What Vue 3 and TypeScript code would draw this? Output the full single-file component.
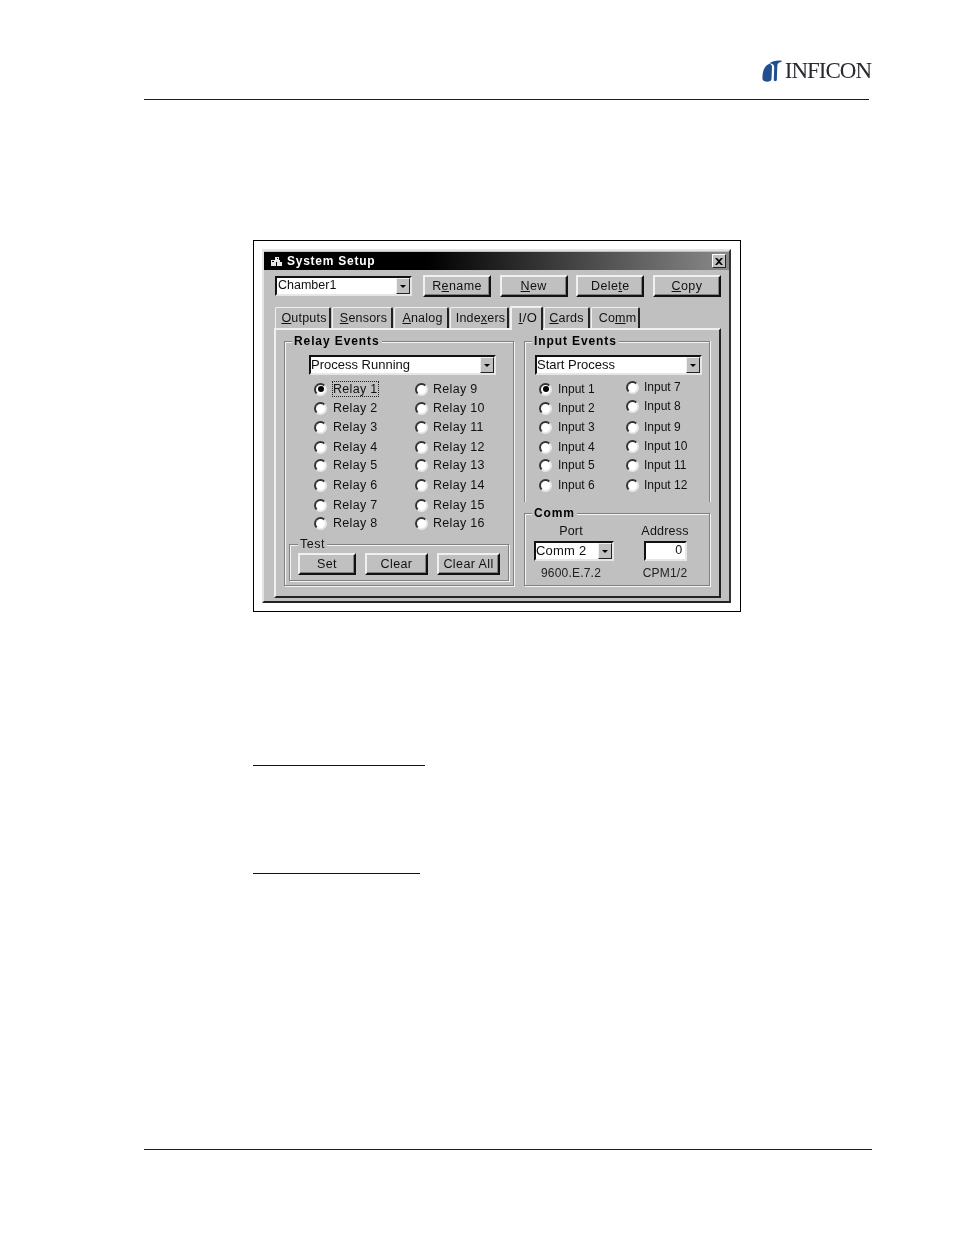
<script setup lang="ts">
const actions = [
  { pre: 'R', key: 'e', post: 'name' },
  { pre: '', key: 'N', post: 'ew' },
  { pre: 'Dele', key: 't', post: 'e' },
  { pre: '', key: 'C', post: 'opy' },
]
const tabs = [
  { pre: '', key: 'O', post: 'utputs', cls: 'w-outputs', active: false },
  { pre: '', key: 'S', post: 'ensors', cls: 'w-sensors', active: false },
  { pre: '', key: 'A', post: 'nalog', cls: 'w-analog', active: false },
  { pre: 'Inde', key: 'x', post: 'ers', cls: 'w-indexers', active: false },
  { pre: '', key: 'I', post: '/O', cls: 'w-io', active: true },
  { pre: '', key: 'C', post: 'ards', cls: 'w-cards', active: false },
  { pre: 'Co', key: 'm', post: 'm', cls: 'w-comm', active: false },
]
const range = (name: string, from: number, to: number) => {
  const out: string[] = []
  for (let i = from; i <= to; i++) out.push(`${name} ${i}`)
  return out
}
const relayA = range('Relay', 1, 8)
const relayB = range('Relay', 9, 16)
const inputA = range('Input', 1, 6)
const inputB = range('Input', 7, 12)
</script>

<template>
  <div class="page">
    <header class="head">
      <div class="logo">
        <svg class="logo-mark" viewBox="0 0 20 22" width="20" height="22" aria-hidden="true">
          <path d="M0.5 19 C0 12 2.5 5.500 7 4 C8.500 3.500 10 4.500 10 7 L9.500 19 C9.500 22.500 1 22.500 0.500 19 Z" fill="#1f4f8f" />
          <path d="M7 3.500 C10 1 15 0 19.500 0.500 L19.500 2 C17 2 15.500 3 15.300 6 L14.800 20 C14.800 21.500 11.800 21.500 11.800 20 L12.200 7 C12.200 4.500 10 3 7 3.500 Z" fill="#1f4f8f" />
        </svg>
        <span class="logo-text">INFICON</span>
      </div>
    </header>

    <div class="shot">
      <div class="window">
        <div class="title">
          <svg class="title-icon" viewBox="0 0 14 11" width="14" height="11" aria-hidden="true">
            <path d="M1 4h4V1h4v3h1v2H6v4H1z M7 6h5v4H7z" fill="#e8e8e8" />
            <path d="M2 5h2v1H2z M7 2h1v1H7z" fill="#000" />
          </svg>
          <span class="title-text">System Setup</span>
          <span class="close">
            <svg viewBox="0 0 8 7" width="8" height="7" aria-hidden="true">
              <path d="M0 0h2l2 2 2-2h2L5 3.500 8 7H6L4 5 2 7H0l3-3.500z" fill="#000" />
            </svg>
          </span>
        </div>

        <div class="toolbar">
          <div class="combo w-chamber">
            <span class="combo-text chamber">Chamber1</span>
            <span class="arrow-btn"><i class="arrow"></i></span>
          </div>
          <div class="actions">
            <div v-for="a in actions" :key="a.post" class="btn w-action">
              {{ a.pre }}<u>{{ a.key }}</u>{{ a.post }}
            </div>
          </div>
        </div>

        <div class="tabs">
          <div
            v-for="t in tabs"
            :key="t.cls"
            class="tab"
            :class="[t.cls, { active: t.active }]"
          >
            {{ t.pre }}<u>{{ t.key }}</u>{{ t.post }}
          </div>
        </div>

        <div class="panel">
          <div class="group relay">
            <span class="legend bold">Relay Events</span>
            <div class="combo w-process">
              <span class="combo-text">Process Running</span>
              <span class="arrow-btn"><i class="arrow"></i></span>
            </div>
            <div class="relay-cols">
              <div class="radio-col rows-relay">
                <div v-for="(r, i) in relayA" :key="r" class="radio-item">
                  <span class="radio" :class="{ on: i === 0 }"></span>
                  <span class="label" :class="{ focus: i === 0 }">{{ r }}</span>
                </div>
              </div>
              <div class="radio-col rows-relay">
                <div v-for="r in relayB" :key="r" class="radio-item tight">
                  <span class="radio"></span>
                  <span class="label">{{ r }}</span>
                </div>
              </div>
            </div>
            <div class="group test">
              <span class="legend thin">Test</span>
              <div class="test-buttons">
                <div class="btn w-set">Set</div>
                <div class="btn w-clear">Clear</div>
                <div class="btn w-clearall">Clear All</div>
              </div>
            </div>
          </div>

          <div class="right-col">
            <div class="group input">
              <span class="legend bold">Input Events</span>
              <div class="combo w-start">
                <span class="combo-text">Start Process</span>
                <span class="arrow-btn"><i class="arrow"></i></span>
              </div>
              <div class="input-cols">
                <div class="radio-col rows-in-a">
                  <div v-for="(r, i) in inputA" :key="r" class="radio-item small">
                    <span class="radio" :class="{ on: i === 0 }"></span>
                    <span class="label">{{ r }}</span>
                  </div>
                </div>
                <div class="radio-col rows-in-b">
                  <div v-for="r in inputB" :key="r" class="radio-item small tight">
                    <span class="radio"></span>
                    <span class="label">{{ r }}</span>
                  </div>
                </div>
              </div>
            </div>

            <div class="group comm">
              <span class="legend bold">Comm</span>
              <div class="comm-grid">
                <div class="comm-col port">
                  <span class="nudge">Port</span>
                  <div class="combo w-port">
                    <span class="combo-text">Comm 2</span>
                    <span class="arrow-btn"><i class="arrow"></i></span>
                  </div>
                  <span class="readout nudge">9600.E.7.2</span>
                </div>
                <div class="comm-col address">
                  <span>Address</span>
                  <div class="field">0</div>
                  <span class="readout">CPM1/2</span>
                </div>
              </div>
            </div>
          </div>
        </div>
      </div>
    </div>

    <div class="rule rule-a"></div>
    <div class="rule rule-b"></div>
    <div class="foot"></div>
  </div>
</template>

<style>
html, body { margin: 0; background: #fff; }
</style>

<style scoped>
* { box-sizing: border-box; }
.page {
  width: 954px;
  height: 1235px;
  overflow: hidden;
  background: #fff;
  font-family: "Liberation Sans", Arial, sans-serif;
  font-size: 13px;
  color: #111;
  display: flex;
  flex-direction: column;
}
.head {
  width: 725px;
  height: 100px;
  margin-left: 144px;
  border-bottom: 1px solid #1a1a2a;
  display: flex;
  justify-content: flex-end;
  align-items: flex-start;
  padding-top: 60px;
}
.logo { display: flex; align-items: flex-start; gap: 3px; margin-right: -2px; filter: blur(0.35px); }
.logo-mark { display: block; }
.logo-text {
  font-family: "Liberation Serif", serif;
  font-size: 23px;
  line-height: 22px;
  letter-spacing: -1px;
  color: #2a2a30;
}
.shot {
  width: 488px;
  height: 372px;
  margin: 140px 0 0 253px;
  border: 1px solid #000;
  padding: 8px 9px 8px 8px;
}
.window {
  height: 354px;
  background: #c0c0c0;
  border: 2px solid;
  border-color: #e4e4e4 #333 #222 #e4e4e4;
  display: flex;
  flex-direction: column;
  filter: blur(0.3px);
}
.title {
  height: 18px;
  margin: 1px 0 0;
  background: linear-gradient(90deg, #000 0%, #000 35%, #3a3a3a 62%, #8a8a8a 100%);
  display: flex;
  align-items: center;
  padding: 0 3px 0 6px;
  color: #fff;
}
.title-icon { flex: none; }
.title-text {
  margin-left: 3px;
  padding-bottom: 1px;
  font-weight: bold;
  font-size: 12px;
  letter-spacing: 0.75px;
}
.close {
  margin-left: auto;
  width: 14px;
  height: 14px;
  background: #c0c0c0;
  border: 1px solid;
  border-color: #fff #222 #222 #fff;
  display: flex;
  align-items: center;
  justify-content: center;
}
.toolbar {
  display: flex;
  margin: 5px 0 0 11px;
  align-items: center;
  gap: 11px;
}
.actions {
  width: 298px;
  display: flex;
  justify-content: space-between;
}
.btn {
  height: 22px;
  background: #c0c0c0;
  border: 2px solid;
  border-color: #f0f0f0 #111 #111 #f0f0f0;
  box-shadow: inset -1px -1px 0 #808080;
  display: flex;
  align-items: center;
  justify-content: center;
  font-size: 12.5px;
  letter-spacing: 0.4px;
  white-space: pre;
}
.w-action { width: 68px; }
.combo {
  height: 20px;
  background: #fff;
  border: 2px solid;
  border-color: #111 #e6e6e6 #e6e6e6 #111;
  display: flex;
  align-items: center;
  justify-content: space-between;
}
.combo-text { font-size: 13px; line-height: 15px; white-space: nowrap; padding-bottom: 1px; }
.combo-text.chamber { font-size: 12.5px; padding-left: 1px; }
.arrow-btn {
  width: 14px;
  height: 16px;
  background: #c0c0c0;
  border: 1px solid;
  border-color: #f0f0f0 #222 #222 #f0f0f0;
  display: flex;
  align-items: center;
  justify-content: center;
}
.arrow {
  display: block;
  width: 0;
  height: 0;
  border-left: 3px solid transparent;
  border-right: 3px solid transparent;
  border-top: 3px solid #000;
}
.w-chamber { width: 137px; }
.w-process { width: 187px; margin: 13px 0 0 24px; }
.w-start { width: 167px; margin: 13px 0 0 10px; }
.w-port { width: 80px; }
.tabs {
  display: flex;
  height: 21px;
  margin: 10px 0 0 11px;
  gap: 1px;
  position: relative;
  z-index: 1;
}
.tab {
  height: 21px;
  background: #c0c0c0;
  border-top: 1px solid #f0f0f0;
  border-left: 1px solid #f0f0f0;
  border-right: 2px solid #222;
  border-radius: 2px 2px 0 0;
  display: flex;
  align-items: center;
  justify-content: center;
  padding-left: 3px;
  font-size: 12.5px;
  letter-spacing: 0.2px;
  white-space: pre;
}
.tab.active {
  height: 24px;
  margin-top: -1px;
  border-left: 2px solid #f0f0f0;
  border-top: 2px solid #f0f0f0;
  padding-bottom: 3px;
  font-size: 13px;
  letter-spacing: 0.5px;
}
.w-outputs { width: 56px; }
.w-sensors { width: 61px; }
.w-analog { width: 55px; }
.w-indexers { width: 59px; }
.w-io { width: 33px; }
.w-cards { width: 46px; padding-left: 0; }
.w-comm { width: 49px; padding-left: 5px; }
.panel {
  width: 447px;
  height: 270px;
  margin-left: 10px;
  background: #c0c0c0;
  border: 2px solid;
  border-color: #f0f0f0 #222 #222 #f0f0f0;
  padding: 11px 0 0 8px;
  display: flex;
  align-items: flex-start;
  gap: 10px;
}
.group {
  position: relative;
  border: 1px solid #808080;
  box-shadow: inset 1px 1px 0 #f4f4f4, 1px 1px 0 #f4f4f4;
}
.relay { width: 230px; height: 245px; }
.right-col {
  width: 186px;
  display: flex;
  flex-direction: column;
  gap: 11px;
}
.input {
  height: 161px;
  border-bottom: 0;
  box-shadow: inset 1px 1px 0 #f4f4f4, 1px 0 0 #f4f4f4;
}
.comm { height: 73px; }
.legend {
  position: absolute;
  top: -8px;
  left: 7px;
  padding: 0 2px;
  background: #c0c0c0;
  line-height: 15px;
  white-space: nowrap;
}
.legend.bold {
  font-weight: bold;
  font-size: 12px;
  letter-spacing: 0.9px;
  color: #000;
}
.legend.thin { left: 8px; font-size: 12.5px; letter-spacing: 0.5px; }
.relay-cols {
  display: flex;
  margin: 7px 0 0 29px;
}
.relay-cols .radio-col { flex: none; width: 101px; }
.input-cols {
  display: flex;
  margin: 5px 0 0 14px;
  align-items: flex-start;
}
.input-cols .radio-col { flex: none; width: 87px; }
.radio-col { display: grid; align-items: start; }
.rows-relay { grid-template-rows: 19px 19px 20px 18px 20px 20px 18px 14px; }
.rows-in-a { grid-template-rows: 19px 19px 20px 18px 20px 14px; margin-top: 2px; }
.rows-in-b { grid-template-rows: 19px 21px 19px 19px 20px 14px; }
.radio-item {
  height: 14px;
  display: flex;
  align-items: center;
  gap: 6px;
  font-size: 12.5px;
  letter-spacing: 0.3px;
  white-space: nowrap;
}
.radio-item.small { font-size: 12px; letter-spacing: 0; }
.radio-item.tight { gap: 5px; }
.radio {
  flex: none;
  width: 13px;
  height: 13px;
  border-radius: 50%;
  background: #fff;
  border: 2px solid;
  border-color: #333 #e8e8e8 #e8e8e8 #333;
  display: flex;
  align-items: center;
  justify-content: center;
}
.radio.on::after {
  content: "";
  width: 6px;
  height: 6px;
  border-radius: 50%;
  background: #000;
}
.label { line-height: 14px; }
.label.focus { outline: 1px dotted #222; outline-offset: 0; padding-right: 1px; }
.test {
  width: 220px;
  height: 37px;
  margin: 14px 0 0 4px;
}
.test-buttons {
  display: flex;
  margin: 8px 0 0 8px;
  gap: 9px;
}
.w-set { width: 58px; }
.w-clear { width: 63px; }
.w-clearall { width: 63px; }
.comm-grid {
  display: flex;
  margin: 10px 0 0 9px;
}
.comm-col {
  display: flex;
  flex-direction: column;
  align-items: center;
  font-size: 12.5px;
  letter-spacing: 0.2px;
  line-height: 15px;
}
.comm-col.port { width: 80px; }
.comm-col.address { width: 100px; padding-left: 7px; }
.nudge { margin-right: 6px; }
.comm-col .combo { margin: 2px 0 3px; }
.field {
  width: 43px;
  height: 20px;
  margin: 2px 0 3px;
  background: #fff;
  border: 2px solid;
  border-color: #111 #e6e6e6 #e6e6e6 #111;
  text-align: right;
  padding-right: 2px;
  line-height: 15px;
}
.readout { margin-top: 2px; color: #222; font-size: 12px; }
.rule { height: 1px; background: #111; }
.rule-a { width: 172px; margin: 153px 0 0 253px; }
.rule-b { width: 167px; margin: 107px 0 0 253px; }
.foot { width: 728px; height: 1px; background: #1a1a2a; margin: 275px 0 0 144px; }
</style>
